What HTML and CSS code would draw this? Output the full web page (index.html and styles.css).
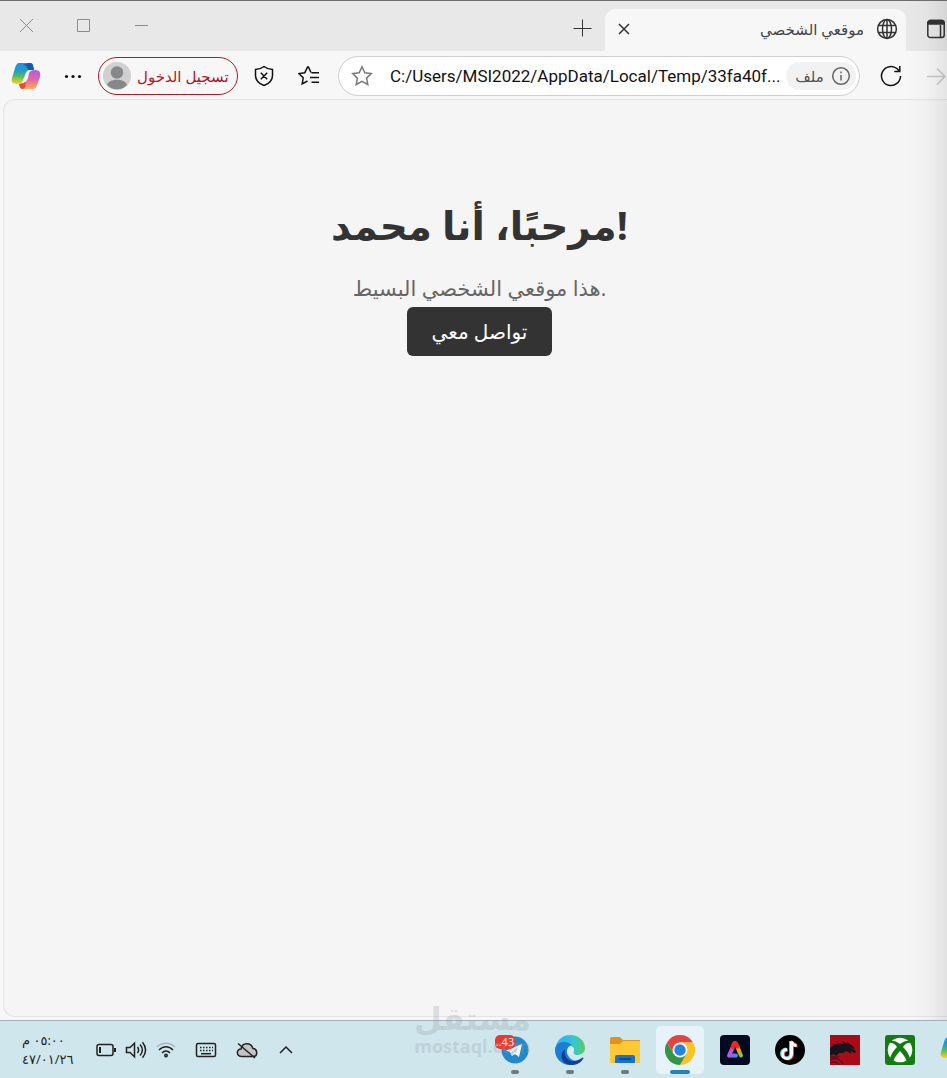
FILE: index.html
```html
<!DOCTYPE html>
<html lang="ar">
<head>
    <meta charset="UTF-8">
    <meta name="viewport" content="width=device-width, initial-scale=1.0">
    <title>موقعي الشخصي</title>
    <link rel="stylesheet" href="styles.css">
</head>
<body>
    <div class="window">
        <!-- Tab strip -->
        <header class="tab-strip">
            <div class="window-controls">
                <button class="control" aria-label="إغلاق"><svg width="16" height="16" viewBox="0 0 16 16"><path d="M1 1l13 13M14 1L1 14"/></svg></button>
                <button class="control" aria-label="تكبير"><svg width="16" height="16" viewBox="0 0 16 16"><path d="M2.500 1.500h12v12h-12z"/></svg></button>
                <button class="control" aria-label="تصغير"><svg width="16" height="16" viewBox="0 0 16 16"><path d="M3 7.500h13"/></svg></button>
            </div>
            <button class="new-tab" aria-label="علامة تبويب جديدة"><svg width="20" height="20" viewBox="0 0 20 20"><path d="M10.500 1.500v17M1.500 10.500h18"/></svg></button>
            <div class="tab">
                <button class="tab-close" aria-label="إغلاق علامة التبويب"><svg width="14" height="14" viewBox="0 0 14 14"><path d="M2 2l10 10M12 2L2 12"/></svg></button>
                <span class="tab-title">موقعي الشخصي</span>
                <svg class="globe" width="22" height="22" viewBox="0 0 22 22"><circle cx="11" cy="11" r="9.400"/><ellipse cx="11" cy="11" rx="4.500" ry="9.400"/><path d="M11 1.600v18.800M2.500 7.500h17M2.500 14.500h17"/></svg>
            </div>
            <button class="tab-actions" aria-label="إجراءات علامات التبويب"><svg width="20" height="20" viewBox="0 0 20 20"><path d="M1.800 4a2.500 2.500 0 0 1 2.500-2.500h11.400A2.500 2.500 0 0 1 18.200 4v12a2.500 2.500 0 0 1-2.500 2.500H4.300A2.500 2.500 0 0 1 1.800 16zM14.500 6v12"/><path class="filled" d="M1.800 5V3.500l2-2h12.400l2 2V5z"/></svg></button>
        </header>

        <!-- Toolbar -->
        <nav class="toolbar">
            <button class="tool copilot" aria-label="Copilot">
                <svg width="30" height="28" viewBox="0 0 30 28">
                    <defs>
                        <linearGradient id="cpA" x1="0" y1="0" x2="0" y2="1"><stop offset="0" stop-color="#1f8fe8"/><stop offset=".4" stop-color="#239fc0"/><stop offset=".65" stop-color="#62bd55"/><stop offset="1" stop-color="#ffd21e"/></linearGradient>
                        <linearGradient id="cpB" x1="0" y1="0" x2="0" y2="1"><stop offset="0" stop-color="#b35be8"/><stop offset=".5" stop-color="#e0679d"/><stop offset="1" stop-color="#ffae61"/></linearGradient>
                    </defs>
                    <path fill="url(#cpA)" d="M8 1h11c3 0 3 2 4 6l-4 1c-3 0-4 2-5 5l-2 5c-1 3-3 4-6 4-5 0-6-3-5-6l3-10c1-3 2-5 4-5z"/>
                    <path fill="#1558b7" d="M17 1h2c3 0 3 3 4 7h-6c-1-3-2-5-5-5z"/>
                    <path fill="url(#cpB)" d="M22 27H12c-3 0-3-2-4-5l3-1c3 0 5-2 6-5l1-5c1-2 3-3 6-3 5 0 6 3 5 7l-3 8c-1 3-2 4-4 4z"/>
                    <path fill="#e94d38" d="M12 27c-2 0-3-1-4-5 3 0 5-1 6-2l1 1-1 4z"/>
                </svg>
            </button>
            <button class="tool more" aria-label="المزيد"><svg width="20" height="20" viewBox="0 0 20 20"><circle cx="3.500" cy="10.500" r="1.600"/><circle cx="10" cy="10.500" r="1.600"/><circle cx="16.500" cy="10.500" r="1.600"/></svg></button>
            <button class="sign-in">
                <svg width="28" height="28" viewBox="0 0 28 28"><circle cx="14" cy="14" r="14" fill="#d0d0d0"/><circle cx="14" cy="10.500" r="6.200" fill="#858889"/><path fill="#858889" d="M4 23c2-7 18-7 20 0a14 14 0 0 1-20 0z"/></svg>
                <span>تسجيل الدخول</span>
            </button>
            <button class="tool shield" aria-label="الحماية"><svg width="20" height="22" viewBox="0 0 20 22"><path d="M10 1.500c2.500 2 5 2.800 8.500 3v6c0 5-3 8-8.500 10-5.500-2-8.500-5-8.500-10v-6c3.500-.2 6-1 8.500-3zM6.800 7.800l6.400 6.400M13.200 7.800l-6.400 6.400"/></svg></button>
            <button class="tool favorites" aria-label="المفضلة"><svg width="22" height="22" viewBox="0 0 22 22"><path d="M13 7.500l-2.500-5.300q-.5-.8-1 0L6.800 7.700.9 8.600l4.300 4.200-1 6 5.300-2.800M13.500 7.800H21M12 12.500h9M13.500 17.200H21"/></svg></button>
            <div class="address-bar">
                <button class="star" aria-label="إضافة إلى المفضلة"><svg width="22" height="22" viewBox="0 0 22 22"><path d="M11 1.800l2.800 5.900 6.500.9-4.700 4.500 1.200 6.400-5.800-3.100-5.800 3.100 1.200-6.400-4.700-4.500 6.500-.9z"/></svg></button>
                <input class="url" type="text" aria-label="العنوان" value="C:/Users/MSI2022/AppData/Local/Temp/33fa40f...">
                <button class="file-chip"><span>ملف</span><svg width="20" height="20" viewBox="0 0 20 20"><circle cx="10" cy="10" r="8.300"/><path d="M10 9v5.500M10 5.500v1.800"/></svg></button>
            </div>
            <button class="tool refresh" aria-label="تحديث"><svg width="22" height="22" viewBox="0 0 22 22"><path d="M20.500 11a9.500 9.500 0 1 1-3.300-7.200l2.300 2.500M19.800 1v5.500h-5.500"/></svg></button>
            <button class="tool forward" aria-label="التالي" disabled><svg width="20" height="20" viewBox="0 0 20 20"><path d="M1 10.500h18M11 2.500l8 8-8 8"/></svg></button>
        </nav>

        <!-- Page -->
        <main class="page">
            <h1>مرحبًا، أنا محمد!</h1>
            <p>هذا موقعي الشخصي البسيط.</p>
            <a class="contact" href="#">تواصل معي</a>
        </main>
    </div>

    <!-- Taskbar -->
    <footer class="taskbar">
        <time class="clock" dir="rtl"><span>٠٥:٠٠ م</span><span dir="ltr">٤٧/٠١/٢٦</span></time>
        <div class="tray">
            <svg width="20" height="22" viewBox="0 0 20 22"><rect x="1" y="5.500" width="16" height="11" rx="2"/><path class="thick" d="M4 8v6M19 9v4"/></svg>
            <svg width="22" height="22" viewBox="0 0 22 22"><path d="M1.500 8.500v5h3.500l4.500 4.200V4.300L5 8.500zM12.500 8c1.500 2 1.500 4 0 6M15 5.500c3 3.500 3 7.500 0 11M17.500 3.300c4 5 4 10.400 0 15.400"/></svg>
            <svg width="20" height="22" viewBox="0 0 20 22"><path class="faint" d="M1 8c5-5 13-5 18 0"/><path d="M3 11c4-4.500 10-4.500 14 0M6 14c2.300-2.600 5.700-2.600 8 0"/><circle cx="10" cy="16.500" r="1.200"/></svg>
            <svg class="keyboard" width="22" height="22" viewBox="0 0 22 22"><rect x="1.500" y="4.500" width="19" height="13" rx="1.500"/><path stroke-dasharray="1.500 1.500" d="M5 8.500h13M5 11.500h13"/><path d="M6 14.700h10"/></svg>
            <svg class="cloud" width="22" height="22" viewBox="0 0 22 22"><path fill="#c4c4c4" d="M6 17.500c-6 0-6-7.500-1-7.500 1-7 10-7 12-.5 5 .5 5 8 0 8z"/><path d="M2 4.500l17 14.500"/></svg>
            <svg width="18" height="22" viewBox="0 0 18 22"><path d="M3 14l6-6 6 6"/></svg>
        </div>
        <div class="apps">
            <button class="app running" aria-label="Telegram">
                <svg width="30" height="30" viewBox="0 0 30 30"><circle cx="15" cy="15" r="13.500" fill="#2088cb"/><path fill="#fff" d="M6 15.500L22 9l-3 13-4-3-3 2-2-4z"/><path fill="#b8d3e5" d="M12 21l-1-4 8-5-5 6z"/></svg>
                <span class="badge">43..</span>
            </button>
            <button class="app running" aria-label="Edge">
                <svg width="30" height="30" viewBox="0 0 30 30">
                    <defs><linearGradient id="edgeTop"><stop offset=".3" stop-color="#2eb8e5"/><stop offset=".65" stop-color="#35c8cc"/><stop offset="1" stop-color="#62cb54"/></linearGradient></defs>
                    <path fill="url(#edgeTop)" d="M1 11C3 4 8 0 15 0c9 0 15 6 15 13 0 5-4 7-8 7-3 0-5-1-3-4 1-6-9-9-18-5z"/>
                    <path fill="#1c7dd8" d="M0 15C0 6 12 5 17 10c-5 1-7 7-3 12 3 4 8 5 13 3-3 4-7 5-12 5C6 30 0 23 0 15z"/>
                    <path fill="#123f91" d="M10 14c-2 10 7 16 17 9 1-1 2 0 1 1-4 6-11 7-16 5-7-3-7-11-2-15z"/>
                    <path fill="#d8edf1" d="M13 14c1-3 6-3 6 1-1 2-1 4 2 5-6 1-9-3-8-6z"/>
                </svg>
            </button>
            <button class="app running" aria-label="مستكشف الملفات">
                <svg width="30" height="30" viewBox="0 0 30 30"><path fill="#df9421" d="M0 4q0-2 2-2h8l3 3h17v8H0z"/><path fill="#fcc935" d="M0 9h10l3-3h17v22H0z"/><path fill="#1671d0" d="M5 28v-6q0-2 2-2h16q2 0 2 2v6z"/><path fill="#124c9f" d="M9 23h12v2H9z"/></svg>
            </button>
            <button class="app active" aria-label="Chrome">
                <svg width="30" height="30" viewBox="0 0 30 30"><path fill="#e5433b" d="M2 7.500a15 15 0 0 1 26 0H15L8.500 18.800z"/><path fill="#fcc324" d="M28 7.500A15 15 0 0 1 15 30l6.500-11.300L15 7.500z"/><path fill="#319648" d="M2 7.500A15 15 0 0 0 15 30l6.500-11.300h-13z"/><circle cx="15" cy="15" r="7.500" fill="#fff"/><circle cx="15" cy="15" r="5.700" fill="#2483dc"/></svg>
            </button>
            <button class="app" aria-label="Adobe Express">
                <svg width="30" height="30" viewBox="0 0 30 30"><rect width="30" height="30" rx="4" fill="#020a20"/><g fill="none" stroke-width="4" stroke-linecap="round"><path stroke="#4f83ee" d="M10 20.500h6"/><path stroke="#c652e5" d="M12.500 13L9 20.500"/><path stroke="#85c64b" d="M19 16l2 4.500"/><path stroke="#f59a21" d="M17.500 12l1.500 4"/><path stroke="#f32620" d="M12.500 12l1.500-3.500q1-1.500 2 0l1.500 3"/></g></svg>
            </button>
            <button class="app" aria-label="TikTok">
                <svg width="30" height="30" viewBox="0 0 30 30"><circle cx="15" cy="15" r="15"/><g fill="none" stroke-width="3"><path stroke="#2ee0dd" d="M15.500 6v12.500a4.500 4.500 0 1 1-4.500-4.500M15.500 6c1 3 2 4 6 4"/><path stroke="#f33b55" d="M17.500 7v12.500a4.500 4.500 0 1 1-4.500-4.500M17.500 7c1 3 2 4 5 4"/><path stroke="#fff" d="M16.500 6.500V19a4.500 4.500 0 1 1-4.500-4.500M16.500 6.500c1 3 2 4 5 4"/></g></svg>
            </button>
            <button class="app" aria-label="Dragon">
                <svg width="30" height="30" viewBox="0 0 30 30"><path fill="#ab0b19" d="M0 0h30v30H0z"/><path fill="#17131c" d="M0 13l4-3-3 0 5-1 3-1 5 1-2-3 6 3-1-2 6 4 2 3-4-1 5 3-1 2-5-2 2 3-6-3-3 2-4 0-3 3-2-2-4 2z"/><path fill="none" stroke="#35121b" d="M0 25c5-3 10-1 13 4M0 28c3-2 7-1 9 2M0 22h9"/></svg>
            </button>
            <button class="app" aria-label="Xbox">
                <svg width="30" height="30" viewBox="0 0 30 30"><rect width="30" height="30" rx="3" fill="#127c13"/><circle cx="15" cy="15" r="12.300" fill="#fff"/><path fill="#127c13" d="M5 6c4-1 7 1 10 3 3-2 6-4 10-3l1 2c-3-1-6 1-8 4 4 4 7 9 7 13l-3 2c-1-4-4-8-7-11-3 3-6 7-7 11l-3-2c0-4 3-9 7-13-2-3-5-5-8-4z"/></svg>
            </button>
            <button class="app" aria-label="Copilot">
                <svg width="30" height="28" viewBox="0 0 30 28"><path fill="url(#cpA)" d="M8 1h11c3 0 3 2 4 6l-4 1c-3 0-4 2-5 5l-2 5c-1 3-3 4-6 4-5 0-6-3-5-6l3-10c1-3 2-5 4-5z"/></svg>
            </button>
        </div>
    </footer>

    <div class="edge-shade"></div>
    <div class="watermark"><strong>مستقل</strong><span>mostaql.com</span></div>
</body>
</html>
```
FILE: styles.css
```css
* {
    box-sizing: border-box;
}
body {
    display: flex;
    flex-direction: column;
    position: relative;
    height: 100vh;
    margin: 0;
    overflow: hidden;
    background-color: #f7f7f7;
    font-family: "Open Sans", "DejaVu Sans", sans-serif;
}
button {
    display: flex;
    align-items: center;
    justify-content: center;
    flex-shrink: 0;
    padding: 0;
    border: none;
    background: none;
    color: #333;
    font-family: inherit;
    cursor: pointer;
}
svg {
    display: block;
    flex-shrink: 0;
}
.window {
    display: flex;
    flex-direction: column;
    flex: 1;
    min-height: 0;
    padding-bottom: 3px;
}

/* Tab strip */
.tab-strip {
    display: flex;
    height: 51px;
    flex-shrink: 0;
    border-top: 1px solid #6e6a6e;
    background-color: #e8e8e8;
    overflow: hidden;
}
.tab-strip svg,
.toolbar svg,
.tray svg {
    fill: none;
    stroke: #333;
}
.window-controls {
    display: flex;
    flex: 1;
}
.control {
    width: 57px;
    height: 50px;
}
.control:first-child {
    width: 54px;
}
.tab-strip .control svg {
    stroke: #8b8b8b;
}
.new-tab {
    width: 46px;
    padding-top: 4px;
}
.tab {
    display: flex;
    align-items: center;
    gap: 12px;
    width: 301px;
    margin-top: 8px;
    padding: 0 8px 2px 12px;
    border-radius: 10px 10px 0 0;
    background-color: #f7f7f7;
}
.tab-close svg {
    stroke-width: 1.5;
}
.tab-title {
    flex: 1;
    color: #444;
    font-size: 15px;
    line-height: 22px;
    text-align: right;
}
.globe {
    stroke-width: 1.5;
}
.tab-actions {
    width: 41px;
    padding: 6px 0 0 20px;
    justify-content: flex-start;
}
.tab-actions svg {
    stroke-width: 1.5;
}
.tab-actions .filled {
    fill: #333;
}

/* Toolbar */
.toolbar {
    display: flex;
    align-items: center;
    height: 48px;
    flex-shrink: 0;
    padding: 2px 0 0 11px;
    overflow: hidden;
}
.tool {
    width: 45px;
    height: 40px;
}
.toolbar .copilot {
    width: 30px;
}
.toolbar .copilot svg {
    stroke: none;
}
.more {
    width: 57px;
    padding-left: 6px;
}
.toolbar .more svg {
    fill: #111;
    stroke: none;
}
.sign-in {
    justify-content: flex-start;
    gap: 6px;
    width: 140px;
    height: 38px;
    padding-left: 4px;
    border: 1px solid #a51d29;
    border-radius: 19px;
    color: #b11525;
    font-size: 15px;
    white-space: nowrap;
}
.toolbar .sign-in svg {
    stroke: none;
}
.shield {
    width: 51px;
}
.shield svg,
.favorites svg,
.refresh svg,
.forward svg {
    stroke-width: 1.5;
}
.favorites {
    width: 39px;
    margin-right: 10px;
}
.address-bar {
    display: flex;
    align-items: center;
    flex: 1;
    min-width: 0;
    height: 40px;
    padding: 0 3px 0 12px;
    border: 1px solid #cfcfcf;
    border-radius: 20px;
    background-color: #fff;
}
.toolbar .star svg {
    stroke: #777;
    stroke-width: 1.5;
}
.url {
    flex: 1;
    min-width: 0;
    height: 30px;
    margin: 0 4px 0 17px;
    padding: 0;
    border: none;
    outline: none;
    background: none;
    color: #111;
    font-family: Roboto, "Open Sans", sans-serif;
    font-size: 17px;
}
.file-chip {
    gap: 7px;
    width: 70px;
    height: 28px;
    padding-left: 4px;
    border-radius: 14px;
    background-color: #f2f2f2;
    color: #555;
    font-size: 15px;
}
.toolbar .file-chip svg {
    stroke: #666;
    stroke-width: 1.5;
}
.refresh {
    width: 62px;
}
.toolbar .refresh svg,
.toolbar .shield svg,
.toolbar .favorites svg {
    stroke: #111;
}
.forward {
    width: 25px;
    padding-left: 4px;
    justify-content: flex-start;
}
.toolbar .forward svg {
    stroke: #c8c8c8;
}

/* Page */
.page {
    flex: 1;
    margin-left: 3px;
    padding: 98px 0 0 8px;
    border: 1px solid #e4e4e4;
    border-right: none;
    border-radius: 12px 0 0 12px;
    background-color: #f5f5f5;
    color: #333;
    text-align: center;
}
.page h1 {
    margin: 0 0 22px;
    font-size: 39px;
    line-height: 54px;
}
.page p {
    margin: 0 0 5px;
    color: #666;
    font-size: 21px;
    line-height: 28px;
}
.contact {
    display: inline-block;
    padding: 11px 25px 10px;
    border-radius: 6px;
    background-color: #333;
    color: #fff;
    font-size: 20px;
    line-height: 28px;
    text-decoration: none;
}

/* Taskbar */
.taskbar {
    display: flex;
    align-items: center;
    height: 58px;
    flex-shrink: 0;
    padding-left: 22px;
    border-top: 1px solid #9fb3b6;
    background-color: #cfe6ec;
    overflow: hidden;
}
.clock {
    display: flex;
    flex-direction: column;
    align-items: flex-end;
    width: 54px;
    color: #222;
    font-size: 13px;
    line-height: 19px;
    white-space: nowrap;
}
.tray {
    display: flex;
    align-items: center;
    gap: 9px;
    margin-left: 20px;
}
.tray svg {
    stroke: #222;
    stroke-width: 1.5;
}
.tray .thick {
    stroke-width: 2;
}
.tray .faint {
    stroke: #a5b9bd;
}
.keyboard,
.cloud {
    margin-left: 10px;
}
.cloud {
    margin-right: 10px;
}
.apps {
    display: flex;
    gap: 7px;
    margin: 0 -32px 0 auto;
}
.app {
    position: relative;
    width: 48px;
    height: 48px;
    border-radius: 5px;
}
.app.active {
    background-color: #e7f3f8;
}
.running::after,
.active::after {
    content: "";
    position: absolute;
    bottom: 0;
    left: 20px;
    width: 8px;
    height: 4px;
    border-radius: 2px;
    background-color: #71797c;
}
.active::after {
    left: 14px;
    width: 20px;
    background-color: #2484b4;
}
.badge {
    position: absolute;
    top: 9px;
    left: 4px;
    width: 20px;
    border-radius: 5px;
    background-color: #ed3832;
    color: #fff;
    font-size: 11px;
    line-height: 14px;
    direction: rtl;
}

/* Overlays */
.edge-shade {
    position: absolute;
    top: 1px;
    right: 0;
    bottom: 58px;
    width: 40px;
    background: linear-gradient(to right, rgba(0, 0, 0, 0), rgba(0, 0, 0, 0.02) 50%, rgba(0, 0, 0, 0.08));
    pointer-events: none;
}
.watermark {
    position: absolute;
    left: 50%;
    bottom: 22px;
    display: flex;
    flex-direction: column;
    align-items: center;
    width: 116px;
    margin-left: -59px;
    color: rgba(150, 160, 165, 0.3);
    pointer-events: none;
}
.watermark strong {
    font-size: 32px;
    line-height: 36px;
}
.watermark span {
    font-size: 18px;
    font-weight: bold;
    line-height: 20px;
}
```
